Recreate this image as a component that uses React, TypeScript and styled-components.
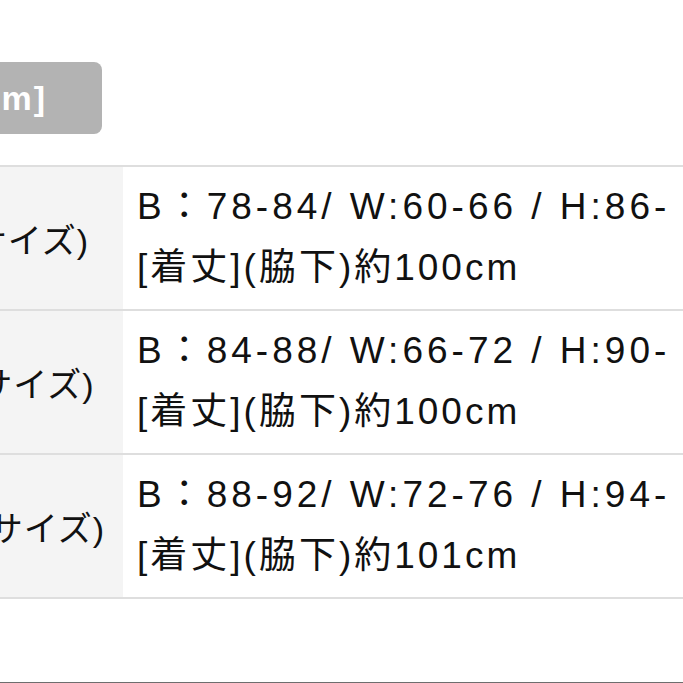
import React from "react";
import styled, { createGlobalStyle } from "styled-components";

/*******************************************************************
 *                            **Types**                            *
 *******************************************************************/
interface ISizeRow {
  label: string;
  measures: string;
  length: string;
}

/*******************************************************************
 *                  **Utility functions/constants**                *
 *******************************************************************/
const FONT_STACK = `"Liberation Sans", "Noto Sans CJK JP", sans-serif`;
const LEFT_OVERFLOW = 100;

const SIZE_ROWS: ISizeRow[] = [
  {
    label: "S(Sサイズ)",
    measures: "B：78-84/ W:60-66 / H:86-92",
    length: "[着丈](脇下)約100cm",
  },
  {
    label: "M(Mサイズ)",
    measures: "B：84-88/ W:66-72 / H:90-96",
    length: "[着丈](脇下)約100cm",
  },
  {
    label: "LL(LLサイズ)",
    measures: "B：88-92/ W:72-76 / H:94-100",
    length: "[着丈](脇下)約101cm",
  },
];

/*******************************************************************
 *                            **Styles**                           *
 *******************************************************************/
const GlobalStyle = createGlobalStyle`
  html, body {
    margin: 0;
    padding: 0;
    background: #ffffff;
    overflow: hidden;
  }

  body {
    font-family: ${FONT_STACK};
    color: #111111;
  }
`;

const Page = styled.div`
  width: 683px;
  height: 683px;
  overflow: hidden;
  padding-top: 62px;
  box-sizing: border-box;
`;

const UnitTab = styled.div`
  display: flex;
  align-items: center;
  justify-content: flex-end;
  width: ${102 + LEFT_OVERFLOW}px;
  height: 72px;
  margin-left: -${LEFT_OVERFLOW}px;
  box-sizing: border-box;
  padding-right: 55px;
  border-radius: 8px;
  background: #b3b3b3;
  color: #ffffff;
  font-size: 34px;
  font-weight: 700;
  letter-spacing: 2px;
`;

const Table = styled.div`
  margin-top: 31px;
  margin-left: -${LEFT_OVERFLOW}px;
  width: ${683 + LEFT_OVERFLOW}px;
  border-top: 2px solid #dedede;
`;

const Row = styled.div`
  display: grid;
  grid-template-columns: ${123 + LEFT_OVERFLOW}px 1fr;
  border-bottom: 2px solid #dedede;
`;

const LabelCell = styled.div`
  display: flex;
  align-items: center;
  justify-content: center;
  padding-right: 21px;
  background: #f4f4f4;
  font-size: 34px;
  letter-spacing: 1px;
  white-space: nowrap;
`;

const ValueCell = styled.div`
  min-width: 0;
  padding: 9px 12px 11px 14px;
  background: #ffffff;
  font-size: 37px;
  line-height: 61px;
  white-space: nowrap;
`;

const Line = styled.div<{ $tracking: number }>`
  overflow: hidden;
  letter-spacing: ${({ $tracking }) => $tracking}px;
`;

const Divider = styled.div`
  margin-top: 83px;
  height: 2px;
  background: #6e6e6e;
`;

/*******************************************************************
 *                           **Component**                         *
 *******************************************************************/
const App: React.FC = () => (
  <>
    <GlobalStyle />
    <Page>
      <UnitTab>[cm]</UnitTab>

      <Table>
        {SIZE_ROWS.map((row) => (
          <Row key={row.label}>
            <LabelCell>{row.label}</LabelCell>
            <ValueCell>
              <Line $tracking={4}>{row.measures}</Line>
              <Line $tracking={3}>{row.length}</Line>
            </ValueCell>
          </Row>
        ))}
      </Table>

      <Divider />
    </Page>
  </>
);

export default App;
